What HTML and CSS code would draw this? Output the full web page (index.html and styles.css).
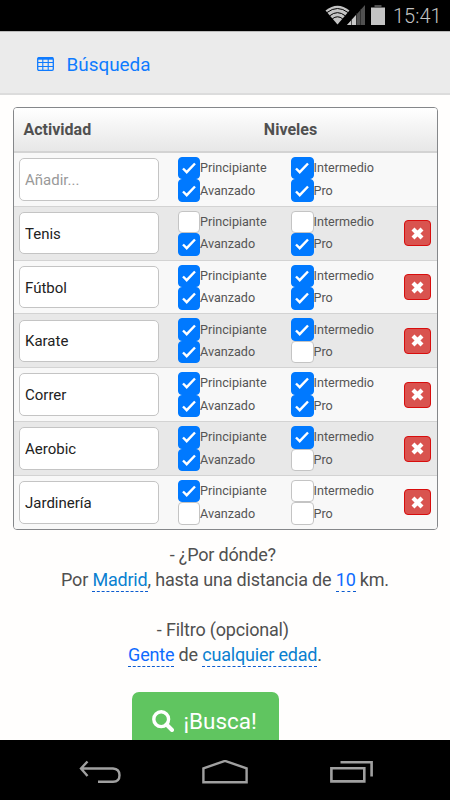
FILE: index.html
```html
<!doctype html>
<html lang="es">

<head>
    <meta charset="utf-8">
    <meta name="viewport" content="width=device-width, initial-scale=1">
    <title>Búsqueda</title>
    <link rel="stylesheet" href="styles.css">
</head>

<body>
    <div class="statusbar">
        <svg class="wifi" width="25" height="20" viewBox="0 0 25 20">
            <path d="M12.500 19.500L0.500 5.500Q12.500 -4 24.500 5.500Z" fill="#c4c4c4"/>
            <path d="M2 7.500Q12.500 -0.500 23 7.500M4.700 10.800Q12.500 4.500 20.300 10.800M7.300 13.800Q12.500 9.800 17.700 13.800" fill="none" stroke="#000" stroke-width="1"/>
        </svg>
        <svg class="signal" width="18" height="20" viewBox="0 0 18 20">
            <path d="M0 20L18 0V20Z" fill="#505050"/>
            <path d="M0 20L9 10V20Z" fill="#c8c8c8"/>
            <path d="M4.500 14V20M9.500 8V20M13.500 4V20" stroke="#222" stroke-width="0.700"/>
        </svg>
        <svg class="battery" width="14" height="20" viewBox="0 0 14 20">
            <path d="M3.500 0H10.500V2H3.500Z" fill="#505050"/>
            <path d="M0 2.500H14V20H0Z" fill="#c4c4c4"/>
        </svg>
        <span class="clock">15:41</span>
    </div>

    <div class="page">
        <div class="navbar">
            <svg width="17" height="14" viewBox="0 0 17 14" fill="none" stroke="#0f7bff">
                <rect x="0.700" y="0.700" width="15.600" height="12.600" rx="1.200" stroke-width="1.300"/>
                <path d="M1 1.500H16" stroke-width="2.400"/>
                <path d="M1 5.500H16M1 9.500H16M5.800 2V13M11.200 2V13" stroke-width="1.100"/>
            </svg>
            <span>Búsqueda</span>
        </div>

        <div class="tabla">
            <div class="cabecera">
                <div class="col-actividad">Actividad</div>
                <div class="col-niveles">Niveles</div>
            </div>
            <div id="filas"></div>
        </div>

        <div class="filtros">
            <p>- ¿Por dónde?&nbsp;<br>Por <a class="lugar">Madrid</a>, hasta una distancia de <a>10</a> km.</p>
            <p>- Filtro (opcional)&nbsp;<br><a>Gente</a> de <a class="lugar">cualquier edad</a>.</p>
        </div>

        <button type="button" class="busca">
            <svg width="22" height="22" viewBox="0 0 22 22" fill="none" stroke="#fff">
                <circle cx="9.200" cy="9.200" r="7.400" stroke-width="3.400"/>
                <path d="M14.500 14.500L20 20" stroke-width="4" stroke-linecap="round"/>
            </svg>
            <span>¡Busca!</span>
        </button>
    </div>

    <div class="softkeys">
        <svg width="42" height="24" viewBox="0 0 42 24" fill="none" stroke="#a0a0a0" stroke-width="2.400">
            <path d="M8.500 1.500L2 8.500L8.500 16M2 8.500H34Q40.500 9 40.500 15.200Q40.500 21.500 34 21.800H19"/>
        </svg>
        <svg width="46" height="25" viewBox="0 0 46 25" fill="none" stroke="#a0a0a0" stroke-width="2.400">
            <path d="M1.400 8.300L23 0.900L44.600 8.300V22.300H1.400Z"/>
        </svg>
        <svg width="43" height="23" viewBox="0 0 43 23" fill="none" stroke="#a0a0a0" stroke-width="2.600">
            <path d="M1.400 8.300H34.300V21.400H1.400ZM10.500 2.300H41.600V16.500"/>
        </svg>
    </div>

    <script>
    const niveles = ['Principiante', 'Intermedio', 'Avanzado', 'Pro'];

    // nombre, niveles marcados
    const actividades = [
        ['', [1, 1, 1, 1]],
        ['Tenis', [0, 0, 1, 1]],
        ['Fútbol', [1, 1, 1, 1]],
        ['Karate', [1, 1, 1, 0]],
        ['Correr', [1, 1, 1, 1]],
        ['Aerobic', [1, 1, 1, 0]],
        ['Jardinería', [1, 0, 0, 0]]
    ];

    const tick = '<svg width="14" height="12" viewBox="0 0 14 12"><path d="M1 6.500L4.700 10.200L13 1.500" fill="none" stroke="#fff" stroke-width="2.400"/></svg>';
    const cruz = '<svg width="13" height="13" viewBox="0 0 13 13"><path d="M2 2L11 11M11 2L2 11" stroke="#fff" stroke-width="4.200"/></svg>';

    let html = '';
    actividades.forEach(([nombre, marcados]) => {
        html += '<div class="fila"><input type="text" class="nombre" placeholder="Añadir..." value="' + nombre + '">';
        html += '<div class="niveles">';
        niveles.forEach((nivel, i) => {
            html += '<label class="nivel"><span class="check' + (marcados[i] ? ' on' : '') + '">' + (marcados[i] ? tick : '') + '</span>' + nivel + '</label>';
        });
        html += '</div>';
        if (nombre) {
            html += '<button type="button" class="borrar">' + cruz + '</button>';
        }
        html += '</div>';
    });
    document.getElementById('filas').innerHTML = html;
    </script>
</body>

</html>
```

FILE: styles.css
```css
* {
    box-sizing: border-box;
}

body {
    margin: 0;
    height: 800px;
    display: flex;
    flex-direction: column;
    overflow: hidden;
    background: #fffefd;
    color: #505050;
    font-family: Roboto, sans-serif;
}

svg {
    display: block;
    flex: none;
}

.statusbar {
    height: 31px;
    flex: none;
    display: flex;
    justify-content: flex-end;
    align-items: flex-start;
    padding: 5px 9px 0 0;
    background: #000;
    color: #c4c4c4;
}

.signal {
    margin-left: -3px;
}

.battery {
    margin-left: 6px;
}

.clock {
    width: 48px;
    margin-left: 8px;
    font-size: 20px;
    line-height: 23px;
    font-weight: 300;
    white-space: nowrap;
}

.page {
    height: 709px;
    flex: none;
    overflow: hidden;
}

.navbar {
    height: 64px;
    display: flex;
    align-items: center;
    gap: 12.500px;
    padding: 3px 0 0 37px;
    background: #ebebeb;
    border-top: 1px solid #bbb;
    border-bottom: 2px solid #dcdcdc;
    color: #0f7bff;
    font-size: 18.900px;
}

.tabla {
    width: 425px;
    height: 423px;
    margin: 12px 0 0 12.500px;
    border: 1.500px solid #85878a;
    border-radius: 4px;
    overflow: hidden;
}

.cabecera {
    height: 45px;
    display: flex;
    align-items: center;
    padding-bottom: 1px;
    background: linear-gradient(#fff, #e7e7e7);
    border-bottom: 2px solid #d3d3d3;
    font-size: 16px;
    font-weight: bold;
}

.col-actividad {
    width: 145px;
    padding-left: 10px;
}

.col-niveles {
    width: 264px;
    text-align: center;
}

.fila {
    height: 53.830px;
    display: flex;
    align-items: center;
    padding-left: 5px;
    background: #f8f8f8;
    border-bottom: 1px solid #d3d3d3;
}

.fila:nth-child(even) {
    background: #e8e8e8;
}

.nombre {
    width: 140px;
    height: 42.500px;
    padding: 1px 5.500px 0;
    background: #fff;
    border: 1px solid #c4c4c4;
    border-radius: 5px;
    color: #222;
    font-family: inherit;
    font-size: 15px;
}

.nombre::placeholder {
    color: #999;
}

.niveles {
    width: 226px;
    display: grid;
    grid-template-columns: 113.500px 1fr;
    grid-auto-rows: 22.500px;
    margin-left: 19px;
}

.nivel {
    display: flex;
    align-items: center;
    color: #555;
    font-size: 12.600px;
    line-height: 14px;
}

.check {
    width: 22.500px;
    height: 22.500px;
    flex: none;
    display: flex;
    align-items: center;
    justify-content: center;
    background: #fff;
    border: 1px solid #c4c4c4;
    border-radius: 4px;
}

.check.on {
    background: #0079ff;
    border-color: #0079ff;
}

.borrar {
    width: 27px;
    height: 26px;
    display: flex;
    align-items: center;
    justify-content: center;
    padding: 0;
    background: #d9534f;
    border: 1px solid #d80d0d;
    border-radius: 4px;
}

.filtros {
    padding-top: 12px;
    font-size: 18px;
    line-height: 25px;
    letter-spacing: -0.190px;
    text-align: center;
}

.filtros p {
    margin: 0 0 25px;
}

.filtros a {
    padding-bottom: 1px;
    color: #0f6bff;
    border-bottom: 1px dashed #0b5bd0;
}

.filtros .lugar {
    color: #0a80d0;
}

.busca {
    width: 147px;
    height: 58px;
    display: flex;
    align-items: center;
    gap: 10px;
    margin-left: 131.500px;
    padding: 0 0 0 20px;
    background: #60c560;
    border: 0;
    border-radius: 7px;
    color: #fff;
    font-family: inherit;
    font-size: 22.500px;
}

.softkeys {
    height: 60px;
    flex: none;
    display: flex;
    justify-content: space-between;
    padding: 19.500px 77.500px 0 78.500px;
    background: #000;
}
```
